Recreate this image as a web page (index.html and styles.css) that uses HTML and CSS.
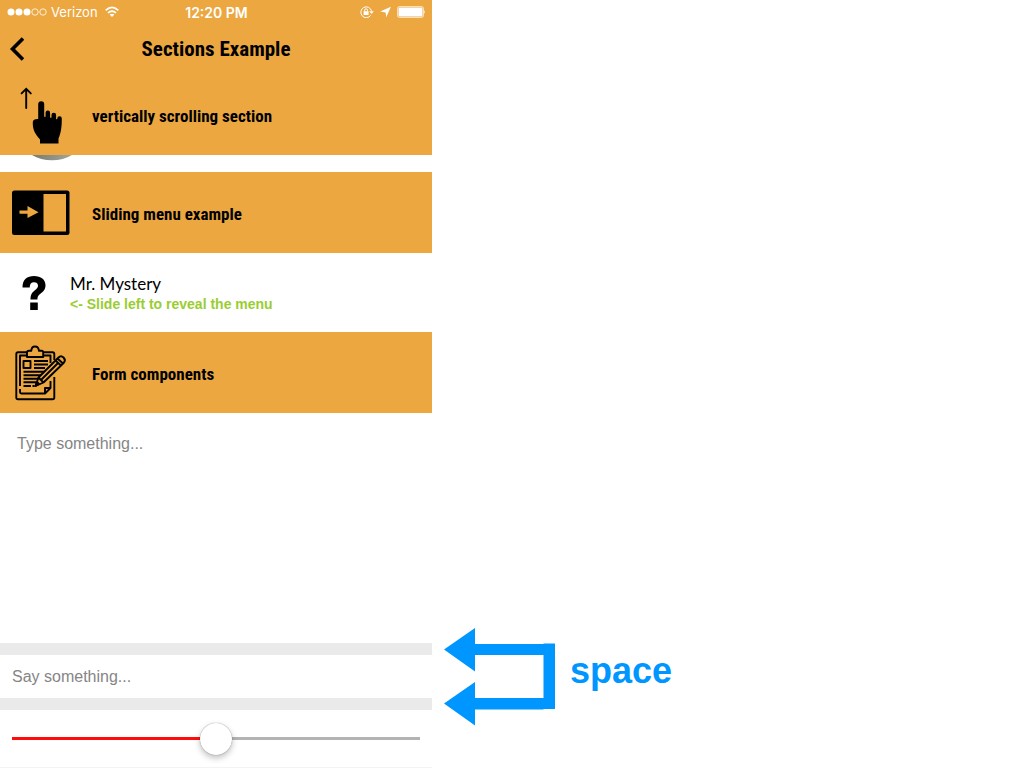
FILE: index.html
```html
<!DOCTYPE html>
<html lang="en">
<head>
<meta charset="utf-8">
<meta name="viewport" content="width=device-width, initial-scale=1">
<title>Sections Example</title>
<link rel="stylesheet" href="styles.css">
</head>
<body>
<div class="page">
  <main class="phone">
    <div class="status">
      <div class="status-left">
        <svg width="40" height="10" viewBox="0 0 40 10" fill="#fff" stroke="none" aria-hidden="true"><circle cx="4" cy="5" r="3.5"/><circle cx="12" cy="5" r="3.5"/><circle cx="20" cy="5" r="3.5"/><g fill="none" stroke="#fff" stroke-width=".8"><circle cx="28" cy="5" r="3.2"/><circle cx="36" cy="5" r="3.2"/></g></svg>
        <span>Verizon</span>
        <svg class="wifi" width="14" height="12" viewBox="0 0 14 12" fill="none" stroke="#fff" stroke-width="1.7" aria-hidden="true"><path d="M.7 4.3Q7-1.6 13.3 4.3M3 6.9Q7 3.3 11 6.9"/><path d="M7 11 4.6 8.6Q7 6.9 9.4 8.6Z" fill="#fff" stroke="none"/></svg>
      </div>
      <time class="clock">12:20 PM</time>
      <div class="status-right">
        <svg width="14" height="12" viewBox="0 0 14 12" fill="none" stroke="#fff" aria-hidden="true"><path d="M10.700 9.300A5.400 5.400 0 1 1 11.500 5"/><path d="M9.200 5.200h4.600l-2.300 2.800Z" fill="#fff" stroke="none"/><path d="M3.600 5.200h5v3.800H3.600Z" fill="#fff" stroke="none"/><path d="M4.700 5.600V4.200a1.400 1.400 0 0 1 2.800 0v1.400"/></svg>
        <svg width="11" height="12" viewBox="0 0 11 12" fill="#fff" aria-hidden="true"><path d="M10.900.7 6.300 11.300 5.600 6.400.2 5.400Z"/></svg>
        <svg width="29" height="12" viewBox="0 0 29 12" aria-hidden="true"><rect x=".5" y=".5" width="26" height="11" rx="2" fill="none" stroke="#fff" stroke-opacity=".65"/><rect x="1.5" y="1.5" width="24" height="9" rx="1" fill="#fff"/><path d="M27.300 4q1.500 2 0 4Z" fill="#fff"/></svg>
      </div>
    </div>

    <header class="navbar">
      <button class="back" type="button" aria-label="Back"><svg width="16" height="24" viewBox="0 0 16 24" fill="none" stroke="#000" stroke-width="3.6" aria-hidden="true"><path d="M15 1.500 4.500 12 15 22.500"/></svg></button>
      <h1>Sections Example</h1>
    </header>

    <section>
      <h2 class="section-head">
        <svg width="60" height="60" viewBox="0 0 60 60" aria-hidden="true"><path d="M14.200 23V4M9.600 8.400 14.200 3.800l4.600 4.600" fill="none" stroke="#000" stroke-width="1.900" stroke-linecap="round"/><path d="M26.200 19.200a3 3 0 0 1 6 0V31.500q.7.8 1.400 0V27.600a2.200 2.200 0 0 1 4.500.5V32.500q.7.6 1.400 0V30a2.300 2.300 0 0 1 4.600 0V34q.6.6 1.200 0V33.500a2.250 2.250 0 0 1 4.500 0C49.800 42 49 48 46.500 53.500V58.500H28V54.500C23.500 49 20.500 45.500 20.800 37Q21 33.800 26.200 34Z"/></svg>
        <span>vertically scrolling section</span>
      </h2>
      <div class="scroller">
        <svg width="80" height="17" viewBox="0 0 80 17" aria-hidden="true"><defs><linearGradient id="photo"><stop stop-color="#777b70"/><stop offset="1" stop-color="#a3a59d"/></linearGradient></defs><path d="M32 0H72C61 7 43 7 32 0Z" fill="url(#photo)"/></svg>
      </div>
    </section>

    <section>
      <h2 class="section-head">
        <svg width="60" height="60" viewBox="0 0 60 60" aria-hidden="true"><path fill-rule="evenodd" d="M2.500 7.500H55Q57.500 7.500 57.500 10V49.500Q57.500 52 55 52H2.500Q0 52 0 49.500V10Q0 7.500 2.500 7.500ZM31.500 11V48.500H54V11ZM7.500 27.500V30.800H15.500V35L26.500 29.200 15.500 23V27.500Z"/></svg>
        <span>Sliding menu example</span>
      </h2>
      <div class="person">
        <svg width="24" height="36" viewBox="0 0 24 36" aria-hidden="true"><path d="M.5 12.500C.5 4.500 5 1 12 1c7 0 11.500 3.700 11.500 9.200 0 4.300-2.300 6.400-4.800 8.200-2.300 1.700-3.300 3-3.300 6.100H8.500c0-4.500 1.100-6.500 4.100-8.900 2.400-1.900 3.400-2.900 3.400-5 0-2.100-1.600-3.300-4-3.300-2.900 0-4.200 1.700-4.300 5.200ZM8.200 27.500h7.600V35H8.200Z"/></svg>
        <div>
          <p class="name">Mr. Mystery</p>
          <p class="hint">&lt;- Slide left to reveal the menu</p>
        </div>
      </div>
    </section>

    <section class="form">
      <h2 class="section-head">
        <svg width="60" height="60" viewBox="0 0 60 60" fill="none" stroke="#000" stroke-width="1.900" stroke-linejoin="round" aria-hidden="true"><path d="M15 9.300H6Q4.300 9.300 4.300 11V54.500Q4.300 56.300 6 56.300H40.500Q42.300 56.300 42.300 54.500V34M31 9.300H40.500Q42.300 9.300 42.300 11V17M15 12.500H8V43M31 12.500H38.500V20M8 46V49Q8 50.500 9.500 50.500H33L38.500 45V38M33 50V45H38.500"/><path d="M15 14V9.500Q15 7.800 17 7.800H19.300Q19.500 3.500 23 3.500T27 7.800H29.500Q31.200 7.800 31.200 9.500V14Z"/><path d="M11.500 18H18.500V25H11.500ZM22 18H36M22 21.500H36M22 25H33M11.500 28.700H32M11.500 32.200H29M11.500 35.700H26M11.500 39.200H24M11.500 43H19M20.500 43H22.500"/><path d="M23.500 43 26.500 34.500 43.500 17.500 46.500 14.500Q49 12 51.500 14.500T52 19.500L49 22.500 31.500 39.500Z" fill="#eca740"/><path d="M26.500 34.500 31.500 39.500M43.500 17.500 49 22.500M45.500 15.500 51 20.500M29 37 46 20"/><path d="M23.500 43 25 39 27 41Z" fill="#000"/></svg>
        <span>Form components</span>
      </h2>
      <textarea class="notes" aria-label="Notes" placeholder="Type something..."></textarea>
      <div class="spacer"></div>
      <input class="field" type="text" aria-label="Message" placeholder="Say something...">
      <div class="spacer"></div>
      <div class="slider-row"><input class="slider" type="range" min="0" max="100" value="50" aria-label="Amount"></div>
    </section>
  </main>

  <aside class="note">
    <svg width="112" height="98" viewBox="0 0 112 98" fill="#0096ff" aria-hidden="true"><path d="M0 21.500 31 0V16H99.500V15.500H111V81H99.500V81.500H31V97.500L0 75.500 31 54V70H99.500V27H31V43.500Z"/></svg>
    <strong>space</strong>
  </aside>
</div>
</body>
</html>
```
FILE: styles.css
```css
* { box-sizing: border-box; }

body {
  margin: 0;
  background: #fff;
  color: #000;
  font-family: "Liberation Sans", Arial, sans-serif;
}

h1, h2, p { margin: 0; }
svg { display: block; flex: none; }

.page {
  display: grid;
  grid-template-columns: 27fr 37fr;
  min-height: 100vh;
}

.phone {
  display: flex;
  flex-direction: column;
  min-width: 0;
  border-bottom: 1px solid #f4f4f4;
}

.status {
  display: grid;
  grid-template-columns: 1fr auto 1fr;
  align-items: center;
  height: 24px;
  padding: 0 6px 0 7px;
  background: #eca740;
  color: #fff;
  font-family: Inter, "Liberation Sans", sans-serif;
  font-size: 13px;
}

.status-left, .status-right {
  display: flex;
  align-items: center;
  gap: 4px;
}

.wifi { margin-left: 3px; }
.status-right { justify-content: flex-end; gap: 6px; }
.clock { font-size: 14px; font-weight: 600; }

.navbar {
  display: grid;
  grid-template-columns: 32px 1fr 32px;
  align-items: center;
  height: 50px;
  padding: 0 8px;
  background: #eca740;
}

.back {
  padding: 0;
  border: 0;
  background: none;
}

h1, .section-head {
  font-family: "Roboto Condensed", "Liberation Sans Narrow", "Arial Narrow", sans-serif;
  font-weight: 700;
}

h1 {
  font-size: 21px;
  line-height: 24px;
  text-align: center;
  white-space: nowrap;
}

.section-head {
  display: flex;
  align-items: center;
  gap: 20px;
  height: 81px;
  padding: 0 12px;
  background: #eca740;
  font-size: 17px;
  line-height: 20px;
}

.section-head span { padding-top: 2px; }

.scroller { height: 17px; overflow: hidden; }

.person {
  display: flex;
  align-items: center;
  gap: 24px;
  height: 79px;
  padding: 0 22px;
}

.name {
  font-family: Lato, sans-serif;
  font-size: 17px;
  line-height: 22px;
}

.hint {
  color: #9acd32;
  font-size: 14px;
  font-weight: 700;
  line-height: 18px;
}

.form {
  display: flex;
  flex: 1;
  flex-direction: column;
}

.notes, .field {
  width: 100%;
  border: 0;
  outline: 0;
  background: #fff;
  color: #000;
  font-family: inherit;
  font-size: 16px;
  line-height: 20px;
}

.notes::placeholder, .field::placeholder { color: #858585; opacity: 1; }

.notes {
  display: block;
  flex: 1;
  min-height: 120px;
  padding: 21px 17px;
  resize: none;
}

.field { height: 43px; padding: 0 12px; }
.spacer { height: 12px; background: #eaeaea; }
.slider-row { display: flex; align-items: center; height: 57px; padding: 0 12px; }

.slider {
  width: 100%;
  height: 32px;
  margin: 0;
  appearance: none;
  background: linear-gradient(to right, #ff0d0d 50%, #b3b3b3 50%) center / 100% 3px no-repeat;
}

.slider::-webkit-slider-thumb {
  width: 32px;
  height: 32px;
  appearance: none;
  border-radius: 50%;
  background: #fff;
  box-shadow: 0 3px 6px rgba(0, 0, 0, .25), 0 0 1px rgba(0, 0, 0, .5);
}

.note {
  display: flex;
  align-items: center;
  align-self: end;
  gap: 14px;
  padding: 0 12px 42px;
  color: #0096ff;
  font-size: 36px;
  line-height: 40px;
}

.note strong { padding-bottom: 12px; }
```
